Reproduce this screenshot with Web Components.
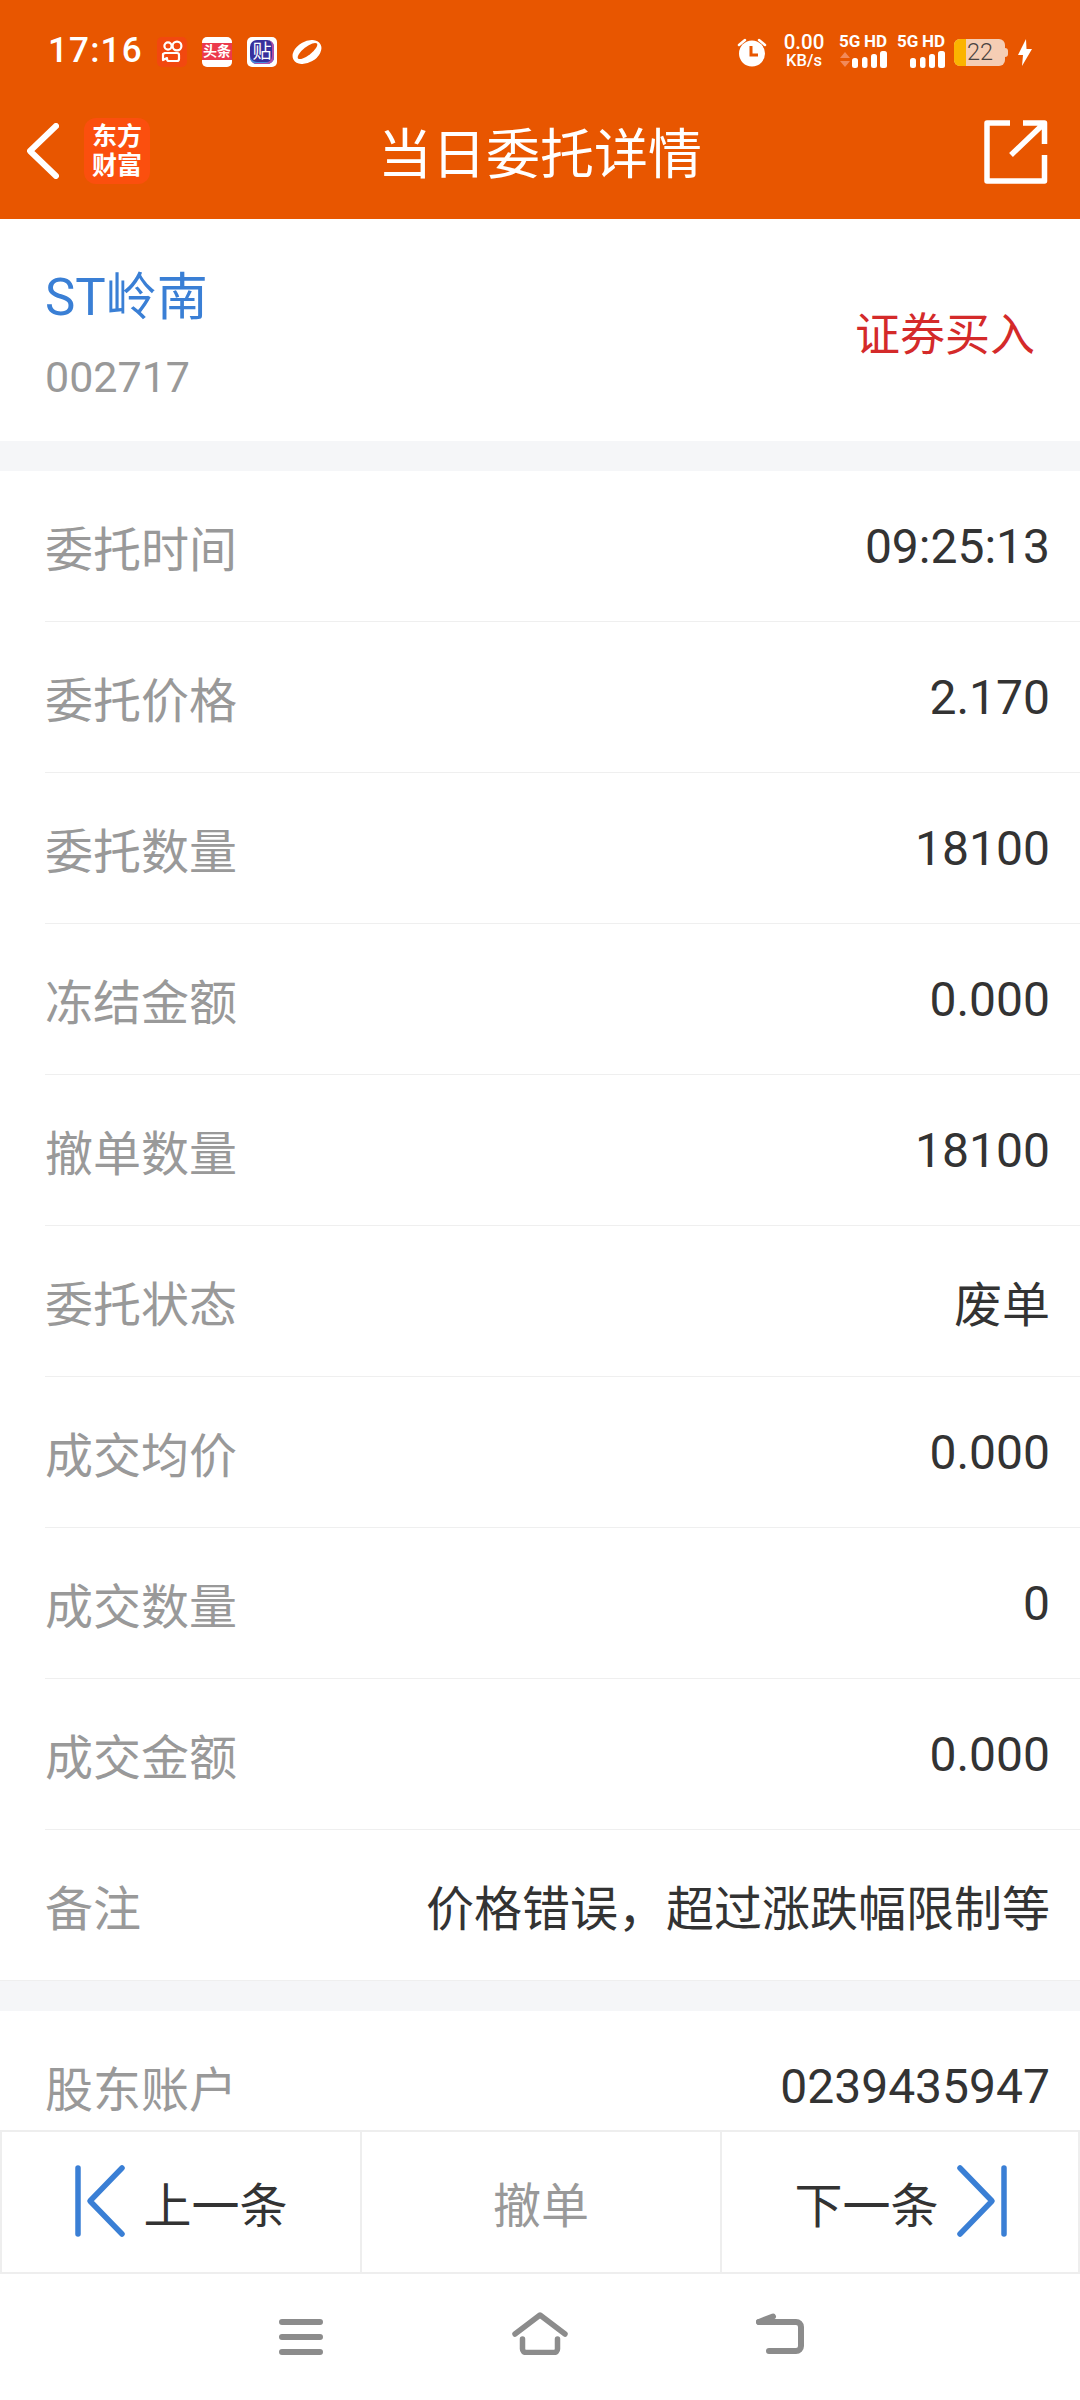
<!DOCTYPE html>
<html lang="zh">
<head>
<meta charset="utf-8">
<title>当日委托详情</title>
<style>
  html, body { margin: 0; padding: 0; background: #fff; }
  body {
    width: 1080px;
    height: 2400px;
    display: flex;
    flex-direction: column;
    overflow: hidden;
    font-family: Roboto, "Noto Sans CJK SC", sans-serif;
  }
</style>
</head>
<body>
  <status-bar></status-bar>
  <title-bar>当日委托详情</title-bar>
  <stock-head name="ST岭南" code="002717" side="证券买入"></stock-head>
  <detail-list>
    <gap-band></gap-band>
    <detail-row label="委托时间">09:25:13</detail-row>
    <detail-row label="委托价格">2.170</detail-row>
    <detail-row label="委托数量">18100</detail-row>
    <detail-row label="冻结金额">0.000</detail-row>
    <detail-row label="撤单数量">18100</detail-row>
    <detail-row label="委托状态">废单</detail-row>
    <detail-row label="成交均价">0.000</detail-row>
    <detail-row label="成交数量">0</detail-row>
    <detail-row label="成交金额">0.000</detail-row>
    <detail-row label="备注" last>价格错误，超过涨跌幅限制等</detail-row>
    <gap-band line></gap-band>
    <detail-row label="股东账户" last>0239435947</detail-row>
  </detail-list>
  <action-bar></action-bar>
  <nav-bar></nav-bar>

<script>
class StatusBar extends HTMLElement {
  connectedCallback() {
    const bars = `<rect x="13" y="7" width="6" height="10" rx="2.500" fill="#fff"/><rect x="23" y="6" width="5.500" height="11" rx="2.500" fill="#fff"/><rect x="32" y="3" width="6" height="14" rx="2.500" fill="#fff"/><rect x="41" y="0" width="7" height="17" rx="2.500" fill="#fff"/>`;
    this.attachShadow({ mode: 'open' });
    this.shadowRoot.innerHTML = `
      <style>
        :host { display: flex; align-items: center; height: 70px; padding: 32px 48px 0 48px; box-sizing: border-box; background: #e85600; color: #fff; flex: none; }
        .time { font: 500 35px/1 Roboto, sans-serif; letter-spacing: 1.2px; width: 109px; padding-bottom: 2px; }
        .apps { display: flex; gap: 15px; margin-top: 1px; }
        svg { display: block; }
        .app { width: 30px; height: 30px; border-radius: 5px; display: flex; align-items: center; justify-content: center; overflow: hidden; position: relative; }
        .ks { background: #f2480f; }
        .tt { background: #fff; }
        .tt span { display: block; width: 100%; height: 17px; margin-top: -1px; background: #ec3a4c; color: #fff; font: 700 14px/17px Roboto, "Noto Sans CJK SC", sans-serif; text-align: center; white-space: nowrap; }
        .tie { background: #fff; }
        .tie span { display: block; width: 24px; height: 24px; border-radius: 7px; background: #38309c; box-shadow: inset -2px -1px 0 #b04fa8, inset 0 -2px 0 #3f8fe0; color: #fff; font: 400 19px/24px Roboto, "Noto Sans CJK SC", sans-serif; text-align: center; }
        .right { margin-left: auto; display: flex; align-items: center; }
        .alarm { margin-top: 2px; }
        .speed { width: 42px; margin-left: 16px; margin-top: -2px; text-align: center; line-height: 1; font-family: Roboto, sans-serif; font-weight: 500; }
        .speed b { display: block; font-size: 20.5px; font-weight: 500; line-height: 20px; }
        .speed i { display: block; font-size: 16.5px; font-style: normal; line-height: 17px; font-weight: 500; white-space: nowrap; }
        .sim { width: 48px; margin-left: 14px; }
        .sim + .sim { margin-left: 10px; }
        .sim .tag { font: 700 17px/14px Roboto, sans-serif; white-space: nowrap; display: flex; justify-content: space-between; }
        .sim svg { margin-top: 3px; }
        .batt { margin-left: 9px; margin-top: 2px; position: relative; width: 54px; height: 27px; }
        .batt .shell { position: absolute; left: 0; top: 0; width: 51px; height: 27px; border-radius: 6px; background: #f5cdb4; overflow: hidden; }
        .batt .fill { position: absolute; left: 0; top: 0; bottom: 0; width: 12px; background: #fbb400; }
        .batt .cap { position: absolute; right: 0; top: 9px; width: 3px; height: 9px; border-radius: 0 3px 3px 0; background: #f5cdb4; }
        .batt .num { position: absolute; left: 13px; top: 0; color: #4a4340; font: 300 23.5px/27px Roboto, sans-serif; }
        .bolt { margin-left: 10px; margin-top: 2px; }
      </style>
      <span class="time">17:16</span>
      <div class="apps">
        <div class="app ks">
          <svg width="22" height="24" viewBox="0 0 22 24" fill="none" stroke="#fff" stroke-width="2.200">
            <circle cx="7" cy="6" r="3.600"/><circle cx="16" cy="6" r="4.400"/>
            <path d="M4 13h12a2 2 0 0 1 2 2v4a2 2 0 0 1-2 2H8a2 2 0 0 1-2-2v-1l-4 2v-6z" stroke-linejoin="round"/>
          </svg>
        </div>
        <div class="app tt"><span>头条</span></div>
        <div class="app tie"><span>贴</span></div>
        <div class="app">
          <svg width="30" height="30" viewBox="0 0 30 30">
            <ellipse cx="15" cy="15" rx="15.500" ry="10.500" transform="rotate(-30 15 15)" fill="#fff"/>
            <ellipse cx="15.500" cy="14" rx="12" ry="4.200" transform="rotate(-38 15.500 14)" fill="#e85600"/>
          </svg>
        </div>
      </div>
      <div class="right">
        <svg class="alarm" width="30" height="30" viewBox="0 0 30 30" fill="#fff">
          <circle cx="15" cy="16.500" r="13"/>
          <path d="M2 8l6-5M28 8l-6-5" stroke="#fff" stroke-width="2.500" stroke-linecap="round"/>
          <path d="M14 9v9h7" fill="none" stroke="#e85600" stroke-width="3"/>
        </svg>
        <div class="speed"><b>0.00</b><i>KB/s</i></div>
        <div class="sim">
          <div class="tag"><span>5G</span><span>HD</span></div>
          <svg width="48" height="17" viewBox="0 0 48 17">
            <path d="M6 1l5 6H1zM6 16l5-6H1z" fill="#f28a5a"/>${bars}
          </svg>
        </div>
        <div class="sim">
          <div class="tag"><span>5G</span><span>HD</span></div>
          <svg width="48" height="17" viewBox="0 0 48 17">${bars}</svg>
        </div>
        <div class="batt"><div class="shell"><div class="fill"></div></div><div class="cap"></div><span class="num">22</span></div>
        <svg class="bolt" width="14" height="27" viewBox="0 0 14 27" fill="#fff"><path d="M8 0L0 16h5L4 27l10-17H8.500z"/></svg>
      </div>
    `;
  }
}

class TitleBar extends HTMLElement {
  connectedCallback() {
    this.attachShadow({ mode: 'open' });
    this.shadowRoot.innerHTML = `
      <style>
        :host { display: flex; align-items: center; justify-content: center; position: relative; height: 149px; background: #e85600; color: #fff; flex: none; font: 400 54px/1 "Noto Sans CJK SC", sans-serif; }
        .title { position: relative; top: 6px; }
        .left { position: absolute; left: 27px; top: 47px; display: flex; align-items: center; gap: 25px; }
        .logo { width: 66px; height: 66px; border-radius: 12px; background: #fb4f0e; font: 700 25px/29px Roboto, "Noto Sans CJK SC", sans-serif; text-align: center; padding: 4px 0; box-sizing: border-box; margin-top: 1px; }
        .share { position: absolute; left: 984px; top: 50px; }
        svg { display: block; }
      </style>
      <div class="left">
        <svg width="32" height="56" viewBox="0 0 32 56" fill="none" stroke="#fff" stroke-width="6" stroke-linecap="round" stroke-linejoin="round"><path d="M29 3L3 28l26 25"/></svg>
        <div class="logo">东方<br>财富</div>
      </div>
      <span class="title"><slot></slot></span>
      <svg class="share" width="64" height="64" viewBox="0 0 64 64" fill="none" stroke="#fff" stroke-width="5.500" stroke-linejoin="round"><path d="M26 3H3v58h57.500V35"/><path d="M60.500 24V3H39M60 3.500L27 35"/></svg>
    `;
  }
}

class StockHead extends HTMLElement {
  connectedCallback() {
    this.attachShadow({ mode: 'open' });
    this.shadowRoot.innerHTML = `
      <style>
        :host { display: flex; align-items: center; justify-content: space-between; height: 222px; padding: 0 45px; box-sizing: border-box; background: #fff; flex: none; font-family: Roboto, "Noto Sans CJK SC", sans-serif; }
        .main { padding-top: 10px; }
        .name { color: #3a7fd5; font-size: 51px; line-height: 60px; }
        .code { color: #999; font-size: 43px; line-height: 50px; margin-top: 24px; }
        .side { color: #d42a2a; font-size: 45px; position: relative; top: 1px; }
      </style>
      <div class="main">
        <div class="name">${this.getAttribute('name')}</div>
        <div class="code">${this.getAttribute('code')}</div>
      </div>
      <div class="side">${this.getAttribute('side')}</div>
    `;
  }
}

class DetailList extends HTMLElement {
  connectedCallback() {
    this.attachShadow({ mode: 'open' });
    this.shadowRoot.innerHTML = `
      <style>
        :host { display: block; flex: 1; min-height: 0; overflow: hidden; background: #fff; }
      </style>
      <slot></slot>
    `;
  }
}

class GapBand extends HTMLElement {
  connectedCallback() {
    this.attachShadow({ mode: 'open' });
    this.shadowRoot.innerHTML = `<style>:host { display: block; height: 30px; background: #f5f6f8; } :host([line]) { border-top: 1px solid #efefef; }</style>`;
  }
}

class DetailRow extends HTMLElement {
  connectedCallback() {
    this.attachShadow({ mode: 'open' });
    this.shadowRoot.innerHTML = `
      <style>
        :host { display: block; font-family: Roboto, "Noto Sans CJK SC", sans-serif; }
        .row { display: flex; align-items: center; justify-content: space-between; height: 150px; margin-left: 45px; padding-right: 30px; border-bottom: 1px solid #efefef; }
        :host([last]) .row { border-bottom: 0; height: 150px; }
        .label { color: #999; font-size: 48px; }
        .value { color: #333; font-size: 48px; }
      </style>
      <div class="row">
        <span class="label">${this.getAttribute('label')}</span>
        <span class="value"><slot></slot></span>
      </div>
    `;
  }
}

class ActionBar extends HTMLElement {
  connectedCallback() {
    this.attachShadow({ mode: 'open' });
    this.shadowRoot.innerHTML = `
      <style>
        :host { display: grid; grid-template-columns: 360px 360px 360px; height: 144px; box-sizing: border-box; background: #fff; flex: none; border-top: 2px solid #eee; border-bottom: 2px solid #eee; font: 400 48px/1 "Noto Sans CJK SC", sans-serif; color: #333; }
        .cell { display: flex; align-items: center; justify-content: center; gap: 17px; box-sizing: border-box; border-left: 2px solid #eee; }
        .cell:first-child { padding-right: 6px; }
        .cell:last-child { border-right: 2px solid #eee; padding-left: 2px; }
        .off { color: #999; }
        svg { display: block; margin-top: -2px; }
      </style>
      <div class="cell">
        <svg width="52" height="74" viewBox="0 0 52 74" fill="none" stroke="#3a7fd5" stroke-width="5.500" stroke-linecap="round" stroke-linejoin="round"><path d="M4 4v66"/><path d="M48 4L16 37l32 33"/></svg>
        <span>上一条</span>
      </div>
      <div class="cell off"><span>撤单</span></div>
      <div class="cell">
        <span>下一条</span>
        <svg width="52" height="74" viewBox="0 0 52 74" fill="none" stroke="#3a7fd5" stroke-width="5.500" stroke-linecap="round" stroke-linejoin="round"><path d="M48 4v66"/><path d="M4 4l32 33L4 70"/></svg>
      </div>
    `;
  }
}

class NavBar extends HTMLElement {
  connectedCallback() {
    this.attachShadow({ mode: 'open' });
    this.shadowRoot.innerHTML = `
      <style>
        :host { display: flex; justify-content: center; align-items: flex-start; gap: 188px; height: 126px; padding: 38px 0 0 2px; box-sizing: border-box; background: #fff; flex: none; }
        svg { display: block; }
        .menu { margin-top: 6px; }
        .back { margin-top: 1px; }
      </style>
      <svg class="menu" width="46" height="38" viewBox="0 0 46 38" fill="none" stroke="#8c8c8c" stroke-width="6" stroke-linecap="round"><path d="M4 4h38M4 19h38M4 34h38"/></svg>
      <svg width="56" height="43" viewBox="0 0 56 43" fill="none" stroke="#8c8c8c" stroke-width="5.500" stroke-linecap="round" stroke-linejoin="round"><path d="M3 22L28 3l25 19"/><path d="M10.500 27v10a3.500 3.500 0 0 0 3.500 3.500h28a3.500 3.500 0 0 0 3.500-3.500V27"/></svg>
      <svg class="back" width="48" height="42" viewBox="0 0 48 42" fill="none" stroke="#8c8c8c" stroke-width="6" stroke-linecap="round" stroke-linejoin="round"><path d="M3 9l14-5.500"/><path d="M3 9h37a5 5 0 0 1 5 5v19a5 5 0 0 1-5 5H13"/></svg>
    `;
  }
}

customElements.define('status-bar', StatusBar);
customElements.define('title-bar', TitleBar);
customElements.define('stock-head', StockHead);
customElements.define('detail-list', DetailList);
customElements.define('gap-band', GapBand);
customElements.define('detail-row', DetailRow);
customElements.define('action-bar', ActionBar);
customElements.define('nav-bar', NavBar);
</script>
</body>
</html>
